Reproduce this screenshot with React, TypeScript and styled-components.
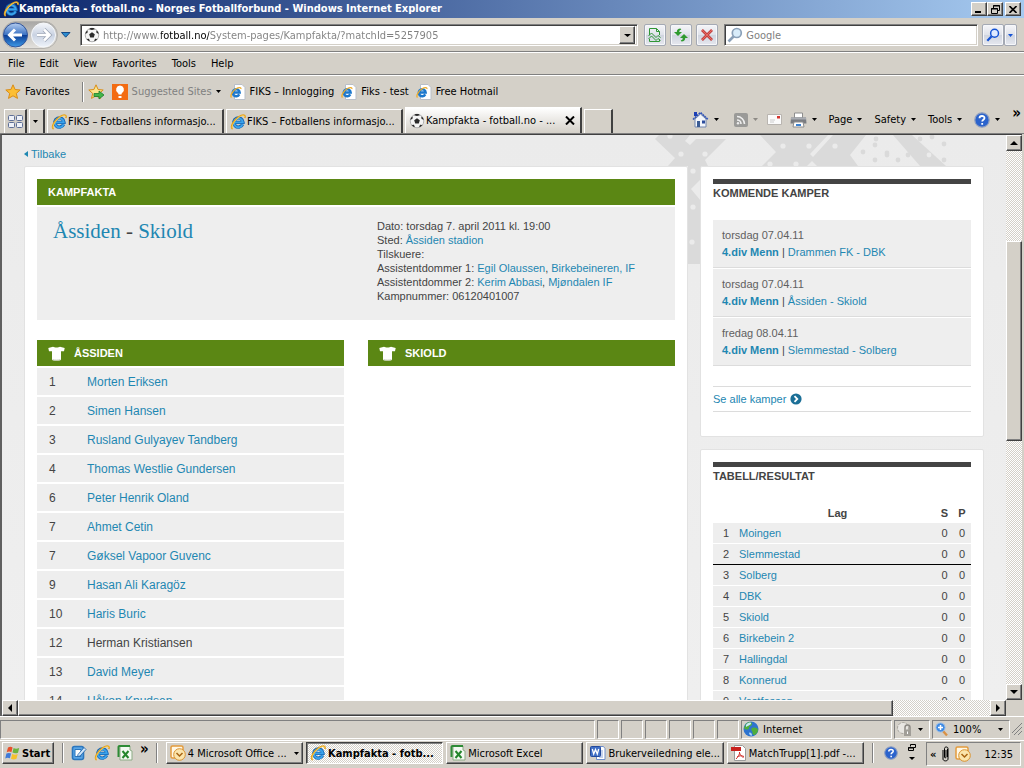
import React from 'react';
import styled, { createGlobalStyle, css } from 'styled-components';

const UI = '"DejaVu Sans Condensed", "DejaVu Sans", "Noto Sans", sans-serif';
const WEB = '"Liberation Sans", Arial, sans-serif';
const FACE = '#d4d0c8';
const LINK = '#1e87b2';
const INK = '#444444';
const GREEN = '#5b8714';

const GlobalStyle = createGlobalStyle`
  *, *::before, *::after { box-sizing: border-box; }
  body {
    margin: 0;
    background: ${FACE};
    overflow: hidden;
    font-family: ${UI};
    font-size: 11px;
    color: #000;
  }
  button, input { font: inherit; color: inherit; margin: 0; }
  h1, h2, p, ul { margin: 0; padding: 0; font-weight: normal; }
  ul { list-style: none; }
  a { text-decoration: none; color: inherit; }
  svg { display: block; flex: none; }
`;

const raised = css`
  border: 1px solid;
  border-color: #ffffff #404040 #404040 #ffffff;
  box-shadow: inset -1px -1px 0 #808080;
  background: ${FACE};
`;

const dither = css`
  background: repeating-conic-gradient(#ffffff 0 25%, ${FACE} 0 50%) 0 0 / 2px 2px;
`;

const Desktop = styled.div`
  display: flex;
  flex-direction: column;
  height: 100vh;
  background: ${FACE};
`;

/* ---------- window chrome ---------- */

const TitleBar = styled.header`
  display: flex;
  align-items: center;
  height: 18px;
  padding: 0 3px;
  background: linear-gradient(to right, #0a246a, #a6caf0);
  color: #fff;
`;

const WindowTitle = styled.h1`
  flex: 1;
  min-width: 0;
  font-size: 11px;
  line-height: 18px;
  font-weight: bold;
  white-space: nowrap;
  overflow: hidden;
`;

const CaptionButton = styled.button<{ $gap?: boolean }>`
  ${raised}
  display: flex;
  align-items: center;
  justify-content: center;
  width: 16px;
  height: 14px;
  padding: 0;
  margin-left: ${(p) => (p.$gap ? '2px' : '0')};
`;

const NavBar = styled.div`
  display: flex;
  align-items: center;
  height: 34px;
  padding: 1px 7px 0 2px;
  border-bottom: 1px solid #808080;
`;

const IconButton = styled.button`
  display: flex;
  align-items: center;
  border: 0;
  padding: 0;
  background: none;
`;

const History = styled.div`
  display: flex;
  align-items: center;
  width: 78px;
  gap: 1px;
`;

const sunken = css`
  border: 1px solid;
  border-color: #808080 #ffffff #ffffff #808080;
  box-shadow: inset 1px 1px 0 #404040, inset -1px -1px 0 ${FACE};
  background: #fff;
`;

const AddressBox = styled.div`
  ${sunken}
  flex: 1;
  display: flex;
  align-items: center;
  height: 22px;
  padding: 2px 2px 2px 3px;
  gap: 3px;
`;

const AddressInput = styled.input`
  flex: 1;
  min-width: 0;
  height: 18px;
  border: 0;
  padding: 0;
  outline: 0;
  font-size: 11px;
  background: linear-gradient(to right, #808080 58px, #000000 58px 106px, #808080 106px);
  -webkit-background-clip: text;
  background-clip: text;
  -webkit-text-fill-color: transparent;
`;

const DropButton = styled.button`
  ${raised}
  display: flex;
  align-items: center;
  justify-content: center;
  width: 16px;
  height: 18px;
  padding: 0;
`;

const NavTools = styled.div`
  display: flex;
  gap: 4px;
  padding: 0 6px;
`;

const GlassButton = styled.button<{ $width?: number }>`
  display: flex;
  align-items: center;
  justify-content: center;
  width: ${(p) => p.$width ?? 22}px;
  height: 22px;
  padding: 0;
  border: 1px solid #a4a9b4;
  border-radius: 2px;
  background: linear-gradient(#f5f5f8, #dfe2ea 50%, #cfd4df 50%, #e6e8ef);
  box-shadow: inset 0 0 0 1px #f6f7fa;
  & + &[data-joined] { border-left: 0; }
`;

const SearchBox = styled.div`
  ${sunken}
  display: flex;
  align-items: center;
  width: 25%;
  height: 22px;
  padding: 0 2px;
  gap: 3px;
  margin-right: 4px;
`;

const SearchInput = styled.input`
  flex: 1;
  min-width: 0;
  border: 0;
  padding: 0;
  outline: 0;
  background: none;
  color: #808080;
  &::placeholder { color: #808080; opacity: 1; }
`;

const MenuBar = styled.nav`
  display: flex;
  align-items: center;
  height: 23px;
  padding-left: 1px;
  border-top: 1px solid #fff;
  border-bottom: 1px solid #808080;
  button {
    border: 0;
    background: none;
    padding: 0 8px 0 7px;
    line-height: 20px;
  }
`;

const FavoritesBar = styled.div`
  display: flex;
  align-items: center;
  height: 32px;
  padding-left: 5px;
  border-top: 1px solid #fff;
  white-space: nowrap;
`;

const FavLink = styled.a<{ $dim?: boolean; $gap: number }>`
  display: flex;
  align-items: center;
  gap: 4px;
  margin-right: ${(p) => p.$gap}px;
  color: ${(p) => (p.$dim ? '#808080' : '#000')};
`;

const Groove = styled.span<{ $after?: number }>`
  width: 2px;
  height: 20px;
  margin-right: ${(p) => p.$after ?? 0}px;
  border-left: 1px solid #808080;
  border-right: 1px solid #fff;
`;

const TabRow = styled.div`
  display: flex;
  align-items: flex-end;
  height: 27px;
  padding-left: 4px;
  border-bottom: 1px solid #808080;
`;

const TabList = styled.div`
  display: flex;
  align-items: flex-end;
  gap: 2px;
`;

const Tab = styled.button<{ $width: number; $active?: boolean }>`
  display: flex;
  align-items: center;
  gap: 1px;
  width: ${(p) => p.$width}px;
  height: ${(p) => (p.$active ? 26 : 24)}px;
  padding: 0 3px;
  border: solid;
  border-width: 1px 2px 0 1px;
  border-color: #fff #404040 #fff #fff;
  background: ${(p) => (p.$active ? `linear-gradient(#ffffff, ${FACE})` : FACE)};
  white-space: nowrap;
  text-align: left;
  span { flex: 1; overflow: hidden; }
`;

const CommandBar = styled.div`
  display: flex;
  flex: 1;
  align-items: center;
  justify-content: flex-end;
  height: 27px;
  padding-right: 3px;
  white-space: nowrap;
`;

const Command = styled.button<{ $gap: number }>`
  display: flex;
  align-items: center;
  gap: 5px;
  border: 0;
  padding: 0;
  margin-right: ${(p) => p.$gap}px;
  background: none;
`;

const Chevron = styled.span`
  align-self: flex-start;
  font-size: 15px;
  line-height: 14px;
  font-weight: bold;
`;

/* ---------- document viewport ---------- */

const Viewport = styled.div`
  flex: 1;
  min-height: 0;
  display: grid;
  grid-template-columns: minmax(0, 1fr) 16px;
  grid-template-rows: minmax(0, 1fr) 16px;
  border-left: 2px solid #606060;
  border-top: 1px solid #404040;
  margin-right: 2px;
`;

const Page = styled.main`
  position: relative;
  overflow: hidden;
  padding: 12px 22px 0;
  background: linear-gradient(#ebebeb, #efefef);
  font-family: ${WEB};
  color: ${INK};
`;

const Pattern = styled.svg`
  position: absolute;
  top: 0;
  right: 38px;
`;

const BackLink = styled.a`
  position: relative;
  display: flex;
  align-items: center;
  gap: 3px;
  height: 14px;
  margin-bottom: 5px;
  color: ${LINK};
  font-size: 11px;
`;

const Columns = styled.div`
  position: relative;
  display: grid;
  grid-template-columns: minmax(0, 1fr) 284px;
  gap: 12px;
  align-items: start;
`;

const Card = styled.section`
  padding: 12px;
  background: #fff;
  border: 1px solid #e2e2e2;
  border-radius: 2px;
`;

const Side = styled.aside`
  display: grid;
  gap: 12px;
`;

const GreenHeading = styled.h2`
  display: flex;
  align-items: center;
  gap: 9px;
  height: 26px;
  padding: 0 11px;
  background: ${GREEN};
  color: #fff;
  font-size: 11px;
  font-weight: bold;
`;

const Summary = styled.div`
  display: grid;
  grid-template-columns: 324px minmax(0, 1fr);
  min-height: 113px;
  margin: 2px 0 20px;
  padding: 12px 16px;
  background: #eeeeee;
`;

const Fixture = styled.p`
  font-family: "Liberation Serif", serif;
  font-size: 21px;
  line-height: 24px;
  a { color: ${LINK}; }
`;

const Facts = styled.div`
  font-size: 11px;
  line-height: 14px;
  a { color: ${LINK}; }
`;

const Teams = styled.div`
  display: grid;
  grid-template-columns: 1fr 1fr;
  gap: 24px;
`;

const Squad = styled.table`
  width: 100%;
  border-collapse: separate;
  border-spacing: 0 2px;
  font-size: 12px;
  td {
    height: 27px;
    padding: 0;
    background: #eeeeee;
  }
  td:first-child { width: 50px; padding-left: 12px; }
  a { color: ${LINK}; }
`;

const SideHeading = styled.h2`
  border-top: 5px solid #444;
  padding-top: 1px;
  font-size: 11px;
  line-height: 16px;
  font-weight: bold;
  color: ${INK};
`;

const Fixtures = styled.ul`
  margin: 19px 0 20px;
`;

const FixtureItem = styled.li`
  height: 48px;
  padding: 7px 9px 0;
  margin-bottom: 1px;
  background: #eeeeee;
  border-bottom: 1px solid #dcdcdc;
  font-size: 11px;
  line-height: 17px;
  time { display: block; color: #606060; }
  a { color: ${LINK}; }
`;

const AllMatches = styled.a`
  display: flex;
  align-items: center;
  gap: 4px;
  height: 26px;
  margin-bottom: 12px;
  border: solid #dcdcdc;
  border-width: 1px 0;
  color: ${LINK};
  font-size: 11px;
`;

const Standings = styled.table`
  width: 100%;
  margin-top: 18px;
  border-collapse: separate;
  border-spacing: 0;
  font-size: 11px;
  th { height: 21px; padding: 0; font-weight: bold; }
  td {
    height: 21px;
    padding: 0;
    background: #eeeeee;
    text-align: center;
  }
  td:first-child { width: 26px; }
  td:nth-child(2) { text-align: left; color: ${LINK}; }
  th:nth-child(3), td:nth-child(3) { width: 17px; }
  th:nth-child(4), td:nth-child(4) { width: 18px; }
`;

const StandingRow = styled.tr<{ $cut?: boolean }>`
  td { border-bottom: 1px solid ${(p) => (p.$cut ? '#000' : '#fff')}; }
`;

const ScrollTrack = styled.div<{ $horizontal?: boolean }>`
  ${dither}
  display: flex;
  flex-direction: ${(p) => (p.$horizontal ? 'row' : 'column')};
  min-width: 0;
  min-height: 0;
`;

const ScrollArrow = styled.button`
  ${raised}
  display: flex;
  align-items: center;
  justify-content: center;
  width: 16px;
  height: 16px;
  padding: 0;
`;

const ScrollSpace = styled.div<{ $grow: number }>`
  flex: ${(p) => p.$grow} 1 0;
`;

const Thumb = styled(ScrollSpace)`
  ${raised}
`;

/* ---------- status bar and task bar ---------- */

const StatusBar = styled.footer`
  display: flex;
  align-items: center;
  gap: 2px;
  height: 24px;
  padding: 2px 2px 1px 0;
  border-top: 1px solid #fff;
`;

const StatusCell = styled.div<{ $width?: number }>`
  display: flex;
  align-items: center;
  gap: 4px;
  flex: ${(p) => (p.$width ? `0 0 ${p.$width}px` : '1')};
  height: 19px;
  padding: 0 6px 0 1px;
  border: 1px solid;
  border-color: #808080 #fff #fff #808080;
  white-space: nowrap;
  span { flex: 1; }
`;

const Taskbar = styled.div`
  display: flex;
  align-items: flex-start;
  height: 28px;
  padding: 1px 3px 0 2px;
  border-top: 1px solid #fff;
`;

const StartButton = styled.button`
  ${raised}
  display: flex;
  align-items: center;
  gap: 1px;
  width: 52px;
  height: 22px;
  padding: 0 2px;
  font-weight: bold;
`;

const QuickLaunch = styled.div<{ $gap: number }>`
  display: flex;
  align-items: center;
  gap: ${(p) => p.$gap}px;
  height: 22px;
  padding: 0 3px 0 8px;
`;

const TaskButtons = styled.div`
  flex: 1;
  min-width: 0;
  display: flex;
  gap: 3px;
  padding: 0 0 0 5px;
`;

const TaskButton = styled.button<{ $pressed?: boolean }>`
  ${raised}
  ${(p) =>
    p.$pressed &&
    css`
      ${dither}
      border-color: #404040 #fff #fff #404040;
      box-shadow: inset 1px 1px 0 #808080;
      font-weight: bold;
    `}
  flex: 1 1 0;
  min-width: 0;
  display: flex;
  align-items: center;
  gap: 2px;
  height: 22px;
  padding: 0 3px;
  white-space: nowrap;
  text-align: left;
  span { flex: 1; overflow: hidden; }
`;

const Tray = styled.div`
  display: flex;
  align-items: center;
  gap: 6px;
  width: 95px;
  height: 24px;
  padding: 0 7px 0 3px;
  margin-left: 7px;
  border: 1px solid;
  border-color: #808080 #fff #fff #808080;
  white-space: nowrap;
  time { flex: 1; text-align: right; }
`;

/* ---------- icons ---------- */

const IeIcon = ({ size = 16 }: { size?: number }) => (
  <svg width={size} height={size} viewBox="0 0 16 16" fill="none">
    <path d="M12.6 10.4A4.6 4.6 0 1 1 13 8.4H5" stroke="#1767b5" strokeWidth="3.400" />
    <path d="M12.6 10.2A4.4 4.4 0 1 1 12.8 8.4H5" stroke="#3aa3ec" strokeWidth="1.900" />
    <path d="M2.6 15C-.4 13 4 5.800 9 2.600 13.500-.2 16 1.200 14.800 4" stroke="#e5a01c" strokeWidth="1.600" />
    <path d="M2.400 14.300C1 12 5 5.800 9.500 3 13 .9 15 1.300 14.600 3" stroke="#fbd961" strokeWidth=".7" />
  </svg>
);

const PageIeIcon = () => (
  <svg width="16" height="16" viewBox="0 0 16 16" fill="none">
    <path d="M4.500 .5h7.500l3 3v12H4.500z" fill="#fff" stroke="#b9bfc8" />
    <path d="M9.300 10.400a3.500 3.500 0 1 1 .4-1.900H3.500" stroke="#1c78cd" strokeWidth="2.400" />
    <path d="M1.500 13.500C-.5 12 3 6.500 6.500 4.500c2.500-1.500 5-1 4.300.5" stroke="#eead2c" strokeWidth="1.300" />
  </svg>
);

const BallIcon = ({ size = 16 }: { size?: number }) => (
  <svg width={size} height={size} viewBox="0 0 16 16">
    <circle cx="8" cy="8" r="6.800" fill="#f4f4f4" stroke="#b0b0b0" />
    <path d="M8 5.200l2.800 2-1 3.300H6.200l-1-3.300zM5 2.200l3 .8 3-.8L9.500 1.100h-3zM1.200 6.700l2.200-.8L3.800 3.400 2.200 4.600zM14.800 6.700l-2.200-.8-.4-2.500 1.600 1.200zM2.500 12l2.500-.2.900 2.400-1.500-.4zM13.500 12l-2.500-.2-.9 2.400 1.500-.4z" fill="#2a2a2a" />
  </svg>
);

const Caret = ({ color = '#000', size = 5 }: { color?: string; size?: number }) => (
  <svg width={size} height="3" viewBox="0 0 6 3" preserveAspectRatio="none">
    <path d="M0 0h6L3 3z" fill={color} />
  </svg>
);

const Arrow = ({ turn = 0 }: { turn?: number }) => (
  <svg width="8" height="8" viewBox="0 0 8 8">
    <path d="M0 6h8L4 2z" fill="#000" transform={`rotate(${turn} 4 4)`} />
  </svg>
);

const NavOrbs = () => (
  <svg width="58" height="28" viewBox="0 0 58 28" fill="none">
    <defs>
      <linearGradient id="orbBlue" x1="0" y1="0" x2="0" y2="1">
        <stop offset="0" stopColor="#b5cdf0" />
        <stop offset=".48" stopColor="#3d74c4" />
        <stop offset=".52" stopColor="#0c3f97" />
        <stop offset="1" stopColor="#3f9be8" />
      </linearGradient>
      <linearGradient id="orbPale" x1="0" y1="0" x2="0" y2="1">
        <stop offset="0" stopColor="#f5f7fb" />
        <stop offset=".5" stopColor="#c9d2e2" />
        <stop offset="1" stopColor="#eef3fa" />
      </linearGradient>
      <linearGradient id="orbTray" x1="0" y1="0" x2="0" y2="1">
        <stop offset="0" stopColor="#a8a7a5" />
        <stop offset="1" stopColor="#e4e2de" />
      </linearGradient>
    </defs>
    <rect x=".5" y=".5" width="55" height="27" rx="13.500" fill="url(#orbTray)" stroke="#b4b2ae" />
    <circle cx="13.500" cy="14" r="12" fill="url(#orbBlue)" stroke="#31549a" />
    <circle cx="41.500" cy="14" r="12" fill="url(#orbPale)" stroke="#f6f8fb" />
    <path d="M20 14H8M13 8.500L7.500 14l5.500 5.500" stroke="#fff" strokeWidth="3" />
    <path d="M35 14h12M42 8.500l5.500 5.500-5.500 5.500" stroke="#9aa3b4" strokeWidth="4" />
    <path d="M35 14h12M42 8.500l5.500 5.500-5.500 5.500" stroke="#fff" strokeWidth="2.600" />
  </svg>
);

const StarIcon = ({ add }: { add?: boolean }) => (
  <svg width="16" height="16" viewBox="0 0 16 16">
    <path d="M8 .8l2.100 4.700 5.100.5-3.900 3.400 1.200 5L8 11.800l-4.500 2.600 1.200-5L.8 6l5.100-.5z" fill={add ? '#fbe58c' : '#fcbf35'} stroke="#d98c17" />
    {add && <path d="M6 9.500h5V7l5 4-5 4v-2.500H6z" fill="#43b649" stroke="#1c7d2b" strokeWidth=".8" />}
  </svg>
);

const BulbIcon = () => (
  <svg width="16" height="16" viewBox="0 0 16 16">
    <path d="M0 0h16v16H0z" fill="#f36c13" />
    <path d="M8 1.500a4 4 0 0 0-2.300 7.200c.6.500.8 1 .8 1.800h3c0-.8.2-1.300.8-1.800A4 4 0 0 0 8 1.500zM6.500 12h3v2h-3z" fill="#fff" />
  </svg>
);

const TilesIcon = () => (
  <svg width="16" height="16" viewBox="0 0 16 16" fill="#eef1f8" stroke="#5e6f96">
    <rect x=".5" y="1.500" width="6" height="5" rx="1" />
    <rect x="8.500" y="1.500" width="6" height="5" rx="1" />
    <rect x=".5" y="8.500" width="6" height="5" rx="1" />
    <rect x="8.500" y="8.500" width="6" height="5" rx="1" />
  </svg>
);

const CompatIcon = () => (
  <svg width="14" height="16" viewBox="0 0 14 16" fill="none" stroke="#2f9636">
    <path d="M1.500 8V1.500h7l3 3V8M8.500 1.500v3h3M1.500 12v2.500h10V12" />
    <path d="M.5 9L3.500 6 8 10.500l2-2 2.500 2M.5 12L3.500 9 8 13.500l2-2 2.500 2" />
  </svg>
);

const RefreshIcon = () => (
  <svg width="16" height="16" viewBox="0 0 16 16" fill="#2e9a2e">
    <path d="M7.500 1.500C5 1.500 3.800 3 3.800 5H1l4 4 4-4H6.300c0-1.500.3-2 2-2.500zM8.500 14.500c2.500 0 3.700-1.500 3.700-3.500H15l-4-4-4 4h2.700c0 1.500-.3 2-2 2.500z" />
  </svg>
);

const StopIcon = () => (
  <svg width="14" height="14" viewBox="0 0 14 14" fill="none">
    <path d="M2 2l10 10M12 2L2 12" stroke="#b52a2a" strokeWidth="2.600" />
    <path d="M2 2l10 10M12 2L2 12" stroke="#e46a64" strokeWidth="1.200" />
  </svg>
);

const MagnifierIcon = ({ stroke = '#8aa0b8', fill = '#d8ecfa', size = 16 }: { stroke?: string; fill?: string; size?: number }) => (
  <svg width={size} height={size} viewBox="0 0 16 16">
    <path d="M6.500 9.500L1.500 14.500" stroke={stroke} strokeWidth="2.600" />
    <circle cx="9.800" cy="6" r="4.500" fill={fill} stroke={stroke} strokeWidth="1.700" />
  </svg>
);

const HomeIcon = () => (
  <svg width="17" height="17" viewBox="0 0 17 17">
    <path d="M3 8l5.500-5L14 8v8H3z" fill="#f3f6fb" stroke="#7286ad" />
    <path d="M1 8.500L8.500 1.500 16 8.500" fill="none" stroke="#3054b8" strokeWidth="1.600" strokeDasharray="2 .6" />
    <path d="M2 1h3v4H2z" fill="#1d3fb5" />
    <path d="M5 10h3v6H5z" fill="#3b5c94" />
    <path d="M10 9.500h3v3h-3z" fill="#2d4d9c" />
  </svg>
);

const FeedIcon = () => (
  <svg width="14" height="14" viewBox="0 0 14 14" fill="none">
    <rect width="14" height="14" rx="2" fill="#9a9a98" />
    <path d="M3 7a4 4 0 0 1 4 4M3 3.500A7.500 7.500 0 0 1 10.500 11" stroke="#eee" strokeWidth="1.600" />
    <circle cx="4" cy="10.200" r="1.200" fill="#eee" />
  </svg>
);

const MailIcon = () => (
  <svg width="15" height="11" viewBox="0 0 15 11">
    <path d="M.5.5h14v10H.5z" fill="#fbfbfb" stroke="#b9b5b0" />
    <path d="M10 2h3v2.500h-3z" fill="#d6362f" />
    <path d="M3 6h5M3 8h4" stroke="#ccc" />
  </svg>
);

const PrinterIcon = () => (
  <svg width="17" height="16" viewBox="0 0 17 16">
    <path d="M4.500 1h8v5h-8z" fill="#fff" stroke="#8d8d8d" />
    <path d="M1 5.500h15l.5 6h-16z" fill="#7a7d82" />
    <path d="M1 5.500h15v2H1z" fill="#a9acb2" />
    <path d="M4 10h9l1 5H3z" fill="#fff" stroke="#8d8d8d" />
    <path d="M6 12h5v2H6z" fill="#3d82d0" />
  </svg>
);

const HelpIcon = ({ size = 16 }: { size?: number }) => (
  <svg width={size} height={size} viewBox="0 0 16 16" fill="none">
    <circle cx="8" cy="8" r="7.200" fill="#2b63cc" stroke="#8f9fc0" strokeWidth="1.200" />
    <path d="M5.500 6.300C5.500 3.300 10.500 3.300 10.500 6c0 1.700-2.300 1.700-2.300 3.500M8.200 11v1.800" stroke="#fff" strokeWidth="1.800" />
  </svg>
);

const ShirtIcon = () => (
  <svg width="17" height="15" viewBox="0 0 17 15">
    <path d="M5 .8c1.500.9 5.500.9 7 0l4.700 1.200-.7 3.300h-3V14c-2 .8-7 .8-9 0V5.300H1L.3 2z" fill="#fff" />
    <path d="M4.500 13.500c2 .8 6 .8 8 0" stroke="#c9cfc0" fill="none" />
  </svg>
);

const GoIcon = () => (
  <svg width="12" height="12" viewBox="0 0 12 12" fill="none">
    <circle cx="6" cy="6" r="5.600" fill="#1b6f97" />
    <path d="M4.500 3.200L7.300 6 4.500 8.800" stroke="#fff" strokeWidth="1.800" />
  </svg>
);

const GlobeIcon = () => (
  <svg width="16" height="16" viewBox="0 0 16 16">
    <circle cx="8" cy="8" r="7.500" fill="#2e74cf" />
    <path d="M3 3c3-3 6-2 6 0S6 5 6 7 2 9 1 7zM9 7c3-1 6 0 6 2s-2 5-4 5-1-3-2-4-1-2 0-3z" fill="#4fae3b" />
    <path d="M3 4c1-2 4-3 5-2S5 5 3 6z" fill="#c8e8f8" />
    <path d="M6 12c1-1 3 0 3 2s-3 0-3-2z" fill="#a9d4f5" />
  </svg>
);

const LockIcon = () => (
  <svg width="18" height="16" viewBox="0 0 18 16" fill="none">
    <circle cx="7" cy="7" r="5.500" fill="#e8e6e2" stroke="#a9a6a0" strokeDasharray="3 1" />
    <path d="M9 9V6.500a2.500 2.500 0 0 1 5 0V9" stroke="#8d8a85" strokeWidth="1.500" />
    <path d="M8 8.500h7V15H8z" fill="#a19e98" />
    <path d="M11 10.500h1v2.500h-1z" fill="#fff" />
  </svg>
);

const ZoomIcon = () => (
  <svg width="15" height="15" viewBox="0 0 13 15" fill="none">
    <path d="M7.500 8.500l4.500 5" stroke="#d99145" strokeWidth="2.400" />
    <circle cx="5.500" cy="5.500" r="4.600" fill="#3f8be4" stroke="#9dbfe8" />
    <path d="M5.500 3v5M3 5.500h5" stroke="#fff" strokeWidth="1.500" />
  </svg>
);

const WindowsIcon = () => (
  <svg width="16" height="16" viewBox="0 0 16 16">
    <path d="M3 2.500C5 1.200 6.300 1.600 7.600 2.500L6.400 7.300C5 6.500 3.500 6.300 1.700 7.300z" fill="#e8502a" />
    <path d="M8.600 3c1.600 1 3.400 1 5.600 0L13 7.700c-2 1-3.800.8-5.500-.1z" fill="#6cb33e" />
    <path d="M1.400 8.600C3.200 7.600 4.700 7.700 6.100 8.500L4.900 13.300C3.500 12.500 2 12.400.2 13.400z" fill="#3f7ad8" />
    <path d="M7.200 9c1.700.9 3.500 1.100 5.500.1l-1.200 4.700c-2 1-3.800.8-5.500-.1z" fill="#f6c12c" />
  </svg>
);

const DesktopIcon = () => (
  <svg width="16" height="16" viewBox="0 0 16 16" fill="none">
    <rect x="1.500" y="1.500" width="11" height="13" rx="2" fill="#5aa6e6" stroke="#2b76bd" strokeWidth="1.600" />
    <path d="M4 4.500h6v7H4z" fill="#fff" stroke="#2b76bd" />
    <path d="M7 9.500l6-7 2 2-6 6.500-2.500.5z" fill="#cfe6fb" stroke="#1b5ea3" strokeWidth=".8" />
  </svg>
);

const ExcelIcon = () => (
  <svg width="16" height="16" viewBox="0 0 16 16" fill="none">
    <path d="M3 1h10v4l2 1v9H3z" fill="#f4faf2" stroke="#8cab86" />
    <path d="M1.500 12V2a1 1 0 0 1 1-1H13" stroke="#2e8b36" strokeWidth="2" />
    <path d="M5.500 6l6 7M11.500 6l-6 7" stroke="#24862c" strokeWidth="2" />
  </svg>
);

const OutlookIcon = () => (
  <svg width="16" height="16" viewBox="0 0 16 16" fill="none">
    <rect x="1" y="1" width="12" height="12" rx="1.500" fill="#fff8e6" stroke="#e39b3c" strokeWidth="1.500" />
    <circle cx="9.500" cy="9.500" r="5.800" fill="#fbe5ac" stroke="#d99331" />
    <path d="M6.500 8l3 3 3-3" stroke="#a86412" strokeWidth="1.500" />
  </svg>
);

const WordIcon = () => (
  <svg width="16" height="16" viewBox="0 0 16 16" fill="none">
    <path d="M6.500 1.500h7l1.500 2v11H6.500z" fill="#fff" stroke="#6f8fcb" />
    <path d="M9 6h4M9 8h4M9 10h4M9 12h4" stroke="#8aa5da" />
    <rect x=".5" y="1.500" width="10" height="10" rx="1" fill="#3f6fc6" stroke="#23499b" />
    <path d="M2.300 4l1.400 5 1.800-4.500L7.300 9l1.400-5" stroke="#fff" strokeWidth="1.300" />
  </svg>
);

const PdfIcon = () => (
  <svg width="16" height="16" viewBox="0 0 16 16" fill="none">
    <path d="M3.500.5h8l3 3v12h-11z" fill="#fff" stroke="#9a9a9a" />
    <path d="M0 2h10v4H0z" fill="#c8201c" />
    <path d="M5 14c2-2 4-5 3.500-7M6 12c2-1.500 5-1.500 7-.5M8.500 8c1 2 2.500 4 4 4.500" stroke="#cf2a24" />
  </svg>
);

const PaperclipIcon = () => (
  <svg width="7" height="16" viewBox="0 0 7 16" fill="none" stroke="#000">
    <path d="M5.500 3v8M1 4v9c0 2.500 5 2.500 5 0V2.500c0-2-3.500-2-3.500 0V11c0 1.200 1.500 1.200 1.500 0V4" />
  </svg>
);

/* ---------- page data ---------- */

const squad: [string, string, boolean?][] = [
  ['1', 'Morten Eriksen'],
  ['2', 'Simen Hansen'],
  ['3', 'Rusland Gulyayev Tandberg'],
  ['4', 'Thomas Westlie Gundersen'],
  ['6', 'Peter Henrik Oland'],
  ['7', 'Ahmet Cetin'],
  ['7', 'Gøksel Vapoor Guvenc'],
  ['9', 'Hasan Ali Karagöz'],
  ['10', 'Haris Buric'],
  ['12', 'Herman Kristiansen', true],
  ['13', 'David Meyer'],
  ['14', 'Håkon Knudsen'],
];

const matches = [
  ['torsdag 07.04.11', 'Drammen FK - DBK'],
  ['torsdag 07.04.11', 'Åssiden - Skiold'],
  ['fredag 08.04.11', 'Slemmestad - Solberg'],
];

const standings = ['Moingen', 'Slemmestad', 'Solberg', 'DBK', 'Skiold', 'Birkebein 2', 'Hallingdal', 'Konnerud', 'Vestfossen'];

const dots = [
  [20, 1], [31, 19], [55, 19], [133, 11], [159, 11], [185, 11], [120, 29], [146, 29], [43, 36], [43, 72], [42, 107],
];
const darkDots = [
  [213, 17], [226, 4], [225, 10], [225, 25], [237, 18], [237, 20], [248, 25], [258, 20], [270, 4], [282, 2], [294, 9], [294, 25],
];

export default function App() {
  return (
    <Desktop>
      <GlobalStyle />
      <TitleBar>
        <IeIcon />
        <WindowTitle>Kampfakta - fotball.no - Norges Fotballforbund - Windows Internet Explorer</WindowTitle>
        <CaptionButton aria-label="Minimize">
          <svg width="8" height="8"><path d="M0 6h6v2H0z" /></svg>
        </CaptionButton>
        <CaptionButton aria-label="Restore">
          <svg width="9" height="9" fill="none" stroke="#000"><path d="M2.500 3V.5h6v5H6M2 1h7M.5 3.500h6v5h-6zM0 4h7" /></svg>
        </CaptionButton>
        <CaptionButton aria-label="Close" $gap>
          <svg width="8" height="7" stroke="#000" strokeWidth="1.600"><path d="M.5 0l7 7M7.500 0l-7 7" /></svg>
        </CaptionButton>
      </TitleBar>

      <NavBar>
        <History>
          <IconButton aria-label="Back and forward"><NavOrbs /></IconButton>
          <IconButton aria-label="Recent pages">
            <svg width="10" height="6"><path d="M.5.500h8.500L4.700 5.200z" fill="#2b8cd0" stroke="#174b87" /></svg>
          </IconButton>
        </History>
        <AddressBox>
          <BallIcon />
          <AddressInput aria-label="Address" defaultValue="http://www.fotball.no/System-pages/Kampfakta/?matchId=5257905" />
          <DropButton aria-label="Show addresses"><Caret size={7} /></DropButton>
        </AddressBox>
        <NavTools>
          <GlassButton aria-label="Compatibility view"><CompatIcon /></GlassButton>
          <GlassButton aria-label="Refresh"><RefreshIcon /></GlassButton>
          <GlassButton aria-label="Stop"><StopIcon /></GlassButton>
        </NavTools>
        <SearchBox>
          <MagnifierIcon />
          <SearchInput aria-label="Search" placeholder="Google" />
        </SearchBox>
        <GlassButton aria-label="Search the web"><MagnifierIcon stroke="#1553d4" fill="#dfeaff" size={14} /></GlassButton>
        <GlassButton aria-label="Search options" $width={13} data-joined><Caret color="#1553d4" /></GlassButton>
      </NavBar>

      <MenuBar>
        {['File', 'Edit', 'View', 'Favorites', 'Tools', 'Help'].map((m) => (
          <button key={m}>{m}</button>
        ))}
      </MenuBar>

      <FavoritesBar>
        <FavLink href="#favorites" $gap={12}><StarIcon />Favorites</FavLink>
        <Groove $after={4} />
        <FavLink href="#add" aria-label="Add to favorites" $gap={8}><StarIcon add /></FavLink>
        <FavLink href="#suggested" $dim $gap={9}><BulbIcon />Suggested Sites<Caret /></FavLink>
        <FavLink href="#fiks" $gap={7}><PageIeIcon />FIKS – Innlogging</FavLink>
        <FavLink href="#test" $gap={7}><PageIeIcon />Fiks - test</FavLink>
        <FavLink href="#hotmail" $gap={7}><PageIeIcon />Free Hotmail</FavLink>
      </FavoritesBar>

      <TabRow>
        <TabList>
          <Tab $width={23} aria-label="Quick tabs"><TilesIcon /></Tab>
          <Tab $width={16} aria-label="Tab list"><Caret /></Tab>
          <Tab $width={177}><IeIcon /><span>FIKS – Fotballens informasjo...</span></Tab>
          <Tab $width={177}><IeIcon /><span>FIKS – Fotballens informasjo...</span></Tab>
          <Tab $width={177} $active>
            <BallIcon />
            <span>Kampfakta - fotball.no - ...</span>
            <svg width="12" height="9" stroke="#000" strokeWidth="2"><path d="M1 .5l8 8M9 .5l-8 8" /></svg>
          </Tab>
          <Tab $width={29} aria-label="New tab" />
        </TabList>
        <CommandBar>
          <Command $gap={15} aria-label="Home"><HomeIcon /><Caret /></Command>
          <Command $gap={9} aria-label="Feeds"><FeedIcon /><Caret color="#8d8a85" /></Command>
          <Command $gap={8} aria-label="Mail"><MailIcon /></Command>
          <Command $gap={12} aria-label="Print"><PrinterIcon /><Caret /></Command>
          <Command $gap={12}>Page<Caret /></Command>
          <Command $gap={12}>Safety<Caret /></Command>
          <Command $gap={12}>Tools<Caret /></Command>
          <Command $gap={12} aria-label="Help"><HelpIcon /><Caret /></Command>
          <Chevron>»</Chevron>
        </CommandBar>
      </TabRow>

      <Viewport>
        <Page>
          <Pattern width="318" height="129" viewBox="0 0 318 129">
            <g fill="#dadada">
              <path d="M9 0L5 4l20 19-7 8h20v98h13V31h7l-3-6L76 4H46l-6 6-5-4 5-6z" />
              <path d="M110 0l16 17-14 14h96l-8-11 16-20zM243 0l27 31h26L262 0z" />
            </g>
            <path d="M178 0h5l-20 22-3-3zM157 31l5-5 5 5z" fill="#ebebeb" />
            <path d="M51 44l-10 10 10 12z" fill="#ebebeb" />
            <g fill="#ebebeb">{dots.map(([x, y]) => <circle key={`${x}-${y}`} cx={x} cy={y} r="2.600" />)}</g>
            <g fill="#dadada">{darkDots.map(([x, y]) => <circle key={`${x}-${y}`} cx={x} cy={y} r="2.400" />)}</g>
            <circle cx="279" cy="20" r="2.400" fill="#ebebeb" />
          </Pattern>
          <BackLink href="#back">
            <svg width="4" height="6"><path d="M4 0v6L0 3z" fill={LINK} /></svg>
            Tilbake
          </BackLink>
          <Columns>
            <Card>
              <GreenHeading>KAMPFAKTA</GreenHeading>
              <Summary>
                <Fixture><a href="#assiden">Åssiden</a> - <a href="#skiold">Skiold</a></Fixture>
                <Facts>
                  <p>Dato: torsdag 7. april 2011 kl. 19:00</p>
                  <p>Sted: <a href="#stadion">Åssiden stadion</a></p>
                  <p>Tilskuere:</p>
                  <p>Assistentdommer 1: <a href="#egil">Egil Olaussen</a>, <a href="#birk">Birkebeineren, IF</a></p>
                  <p>Assistentdommer 2: <a href="#kerim">Kerim Abbasi</a>, <a href="#mjondalen">Mjøndalen IF</a></p>
                  <p>Kampnummer: 06120401007</p>
                </Facts>
              </Summary>
              <Teams>
                <div>
                  <GreenHeading><ShirtIcon />ÅSSIDEN</GreenHeading>
                  <Squad>
                    <tbody>
                      {squad.map(([no, name, plain]) => (
                        <tr key={name}>
                          <td>{no}</td>
                          <td>{plain ? name : <a href="#player">{name}</a>}</td>
                        </tr>
                      ))}
                    </tbody>
                  </Squad>
                </div>
                <div>
                  <GreenHeading><ShirtIcon />SKIOLD</GreenHeading>
                </div>
              </Teams>
            </Card>
            <Side>
              <Card>
                <SideHeading>KOMMENDE KAMPER</SideHeading>
                <Fixtures>
                  {matches.map(([day, game]) => (
                    <FixtureItem key={game}>
                      <time>{day}</time>
                      <a href="#div"><b>4.div Menn</b></a> | <a href="#match">{game}</a>
                    </FixtureItem>
                  ))}
                </Fixtures>
                <AllMatches href="#all">Se alle kamper <GoIcon /></AllMatches>
              </Card>
              <Card>
                <SideHeading>TABELL/RESULTAT</SideHeading>
                <Standings>
                  <thead>
                    <tr><th /><th>Lag</th><th>S</th><th>P</th></tr>
                  </thead>
                  <tbody>
                    {standings.map((team, i) => (
                      <StandingRow key={team} $cut={i === 1}>
                        <td>{i + 1}</td>
                        <td><a href="#team">{team}</a></td>
                        <td>0</td>
                        <td>0</td>
                      </StandingRow>
                    ))}
                  </tbody>
                </Standings>
              </Card>
            </Side>
          </Columns>
        </Page>
        <ScrollTrack>
          <ScrollArrow aria-label="Scroll up"><Arrow /></ScrollArrow>
          <ScrollSpace $grow={90} />
          <Thumb $grow={199} />
          <ScrollSpace $grow={244} />
          <ScrollArrow aria-label="Scroll down"><Arrow turn={180} /></ScrollArrow>
        </ScrollTrack>
        <ScrollTrack $horizontal>
          <ScrollArrow aria-label="Scroll left"><Arrow turn={-90} /></ScrollArrow>
          <Thumb $grow={875} />
          <ScrollSpace $grow={97} />
          <ScrollArrow aria-label="Scroll right"><Arrow turn={90} /></ScrollArrow>
        </ScrollTrack>
      </Viewport>

      <StatusBar>
        <StatusCell />
        {[0, 1, 2, 3, 4, 5].map((n) => <StatusCell key={n} $width={22} />)}
        <StatusCell $width={151}><GlobeIcon />Internet</StatusCell>
        <StatusCell $width={35}><LockIcon /><Caret /></StatusCell>
        <StatusCell $width={78}><ZoomIcon /><span>100%</span><Caret /></StatusCell>
        <svg width="10" height="14" stroke="#808080"><path d="M0 11L10 1M2 13l8-8M6 13l4-4" /></svg>
      </StatusBar>

      <Taskbar>
        <StartButton><WindowsIcon />Start</StartButton>
        <QuickLaunch $gap={7}>
          <Groove />
          <IconButton aria-label="Show desktop"><DesktopIcon /></IconButton>
          <IconButton aria-label="Internet Explorer"><IeIcon /></IconButton>
          <IconButton aria-label="Excel"><ExcelIcon /></IconButton>
          <Chevron>»</Chevron>
          <Groove />
        </QuickLaunch>
        <TaskButtons>
          <TaskButton><OutlookIcon /><span>4 Microsoft Office ...</span><Caret /></TaskButton>
          <TaskButton $pressed><IeIcon /><span>Kampfakta - fotb...</span></TaskButton>
          <TaskButton><ExcelIcon /><span>Microsoft Excel</span></TaskButton>
          <TaskButton><WordIcon /><span>Brukerveiledning ele...</span></TaskButton>
          <TaskButton><PdfIcon /><span>MatchTrupp[1].pdf -...</span></TaskButton>
        </TaskButtons>
        <QuickLaunch $gap={10}>
          <Groove />
          <IconButton aria-label="Help"><HelpIcon size={14} /></IconButton>
          <svg width="8" height="18" fill="none" stroke="#000"><path d="M2.500 2.500v-2h5v3h-2M.5 3.500h5v3h-5zM0 4h6" /><path d="M1 13h6l-3 3z" fill="#000" stroke="none" /></svg>
        </QuickLaunch>
        <Tray>
          <b>«</b>
          <PaperclipIcon />
          <OutlookIcon />
          <time>12:35</time>
        </Tray>
      </Taskbar>
    </Desktop>
  );
}
